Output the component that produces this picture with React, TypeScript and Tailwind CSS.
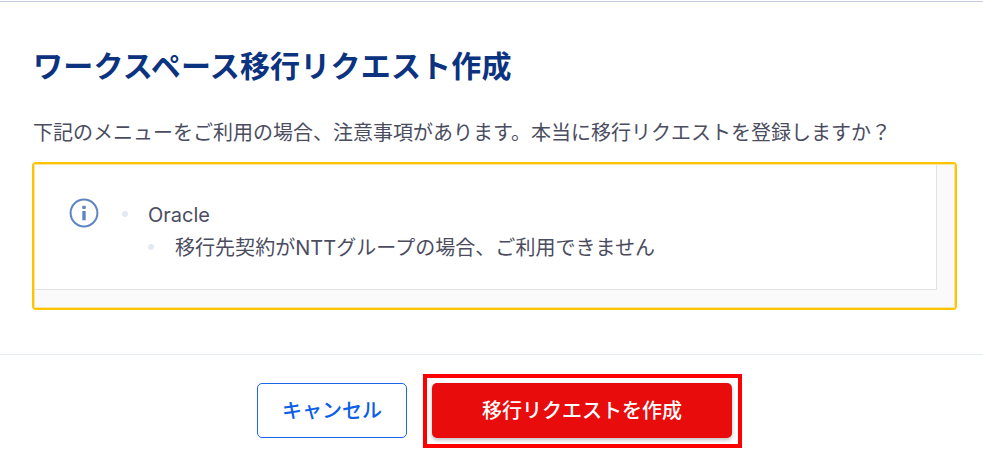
const notices = [
  {
    menu: 'Oracle',
    notes: ['移行先契約がNTTグループの場合、ご利用できません'],
  },
]

function InfoIcon() {
  return (
    <svg width="30" height="30" viewBox="0 0 30 30" fill="none" className="shrink-0">
      <circle cx="15" cy="15" r="13.4" stroke="#5f84c2" strokeWidth="2" />
      <rect x="13.2" y="7.8" width="3.6" height="3.2" rx="1" fill="#5f84c2" />
      <path d="M13.3 13h3.4v9.3h-3.4z" fill="#5f84c2" />
    </svg>
  )
}

function Bullet() {
  return <span className="mt-[12px] h-[6px] w-[6px] shrink-0 rounded-full bg-[#e3e8f2]" />
}

export default function App() {
  return (
    <div className="flex h-[472px] w-[983px] flex-col overflow-hidden bg-white pt-px font-['Inter','Noto_Sans_CJK_JP',sans-serif] text-[20px] leading-8 text-[#4b4d5f]">
      <div className="h-[353px] border-t border-[#c1cbdf] pt-[44px] pr-[26px] pl-8">
        <h1 className="h-10 pl-px text-[30px] leading-10 font-bold tracking-[0.2px] whitespace-nowrap text-[#0b3380]">
          ワークスペース移行リクエスト作成
        </h1>
        <p className="mt-[31px] pl-px whitespace-nowrap">
          下記のメニューをご利用の場合、注意事項があります。本当に移行リクエストを登録しますか？
        </p>

        <div className="mt-[13px] h-[148px] w-[925px] rounded-[4px] border-2 border-[#ffc400] bg-[#fff0c0]">
          <div className="h-full border border-[#f9e3a0] bg-[#fafafa]">
            <div className="flex h-[125px] w-[902px] border-r border-b border-[#e2e2e2] bg-white pt-[33px] pl-[34px]">
              <InfoIcon />
              <ul className="mt-px ml-[23px]">
                {notices.map((notice) => (
                  <li key={notice.menu} className="flex gap-[20px]">
                    <Bullet />
                    <div>
                      <span className="block">{notice.menu}</span>
                      <ul>
                        {notice.notes.map((note) => (
                          <li key={note} className="flex gap-[21px] pt-px tracking-[0.04px] whitespace-nowrap">
                            <Bullet />
                            {note}
                          </li>
                        ))}
                      </ul>
                    </div>
                  </li>
                ))}
              </ul>
            </div>
          </div>
        </div>
      </div>

      <div className="flex flex-1 items-start gap-4 border-t border-[#e8edf5] pt-[19px] pl-[257px] font-medium">
        <button className="mt-[9px] h-[55px] w-[150px] rounded-[5px] border border-[#1b66e8] text-[#0b5ee8]">
          キャンセル
        </button>
        <div className="h-[74px] w-[319px] border-4 border-[#ff0000] pt-[5px] pl-[5px]">
          <button className="block h-[55px] w-[300px] rounded-[5px] bg-[#e80c0c] text-white shadow-[0_2px_4px_rgba(0,0,0,0.25)]">
            移行リクエストを作成
          </button>
        </div>
      </div>
    </div>
  )
}
